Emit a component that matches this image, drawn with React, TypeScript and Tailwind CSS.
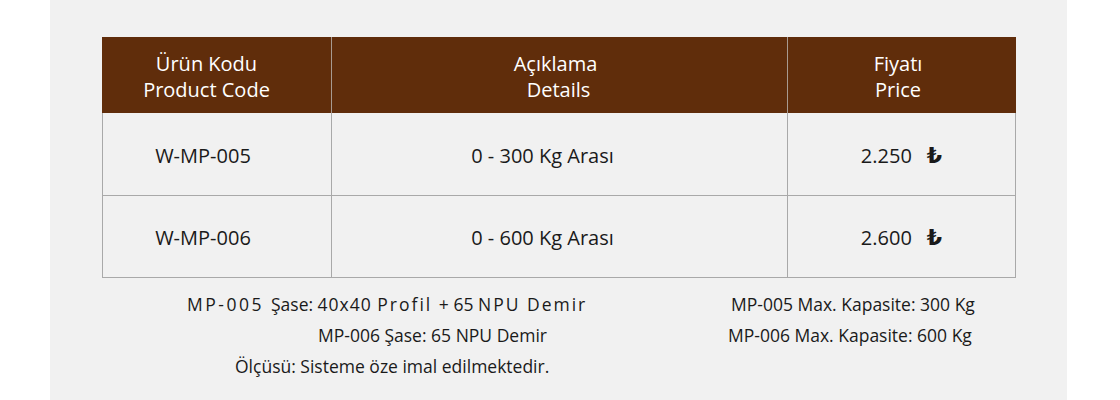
const rows = [
  { code: "W-MP-005", desc: "0 - 300 Kg Arası", price: "2.250" },
  { code: "W-MP-006", desc: "0 - 600 Kg Arası", price: "2.600" },
];

function Lira() {
  return (
    <span className="ml-[15px] font-['DejaVu_Sans','Noto_Sans',sans-serif] text-[22px] leading-none font-bold">
      ₺
    </span>
  );
}

export default function App() {
  return (
    <div className="h-[400px] w-[1120px] bg-white font-['Open_Sans',sans-serif]">
      <div className="ml-[50px] h-full w-[1017px] bg-[#f1f1f1] pt-[37px]">
        <div className="ml-[52px] w-[914px] border-x border-b border-[#a9a9a9]">
          <div className="-mx-px grid h-[76px] grid-cols-[230px_456px_228px] bg-[#602d0b] text-[20px] leading-[26px] text-white">
            <div className="flex flex-col items-center justify-center border-r border-[#a89a90] pt-[3px] pr-[20px]">
              <span>Ürün Kodu</span>
              <span>Product Code</span>
            </div>
            <div className="flex flex-col items-center justify-center border-r border-[#a89a90] pt-[3px] pr-[8px]">
              <span>Açıklama</span>
              <span className="pl-[6px]">Details</span>
            </div>
            <div className="flex flex-col items-center justify-center pt-[3px] pr-[8px]">
              <span>Fiyatı</span>
              <span>Price</span>
            </div>
          </div>
          {rows.map((r, i) => (
            <div
              key={r.code}
              className={`grid h-[82px] grid-cols-[229px_456px_227px] text-[20px] text-[#1a1a1a] ${
                i > 0 ? "border-t border-[#a9a9a9]" : ""
              }`}
            >
              <div className="flex items-center justify-center border-r border-[#a9a9a9] pt-[3px] pr-[28px]">
                {r.code}
              </div>
              <div className="flex items-center justify-center border-r border-[#a9a9a9] pt-[3px] pr-[34px]">
                {r.desc}
              </div>
              <div className="flex items-center justify-center pt-[3px]">
                {r.price}
                <Lira />
              </div>
            </div>
          ))}
        </div>

        <div className="mt-[11px] flex text-[17.5px] leading-[31px] text-[#1a1a1a]">
          <div className="w-[678px]">
            <div className="pl-[137px]">
              <span className="tracking-[2.5px]">MP-005 </span>
              <span>Şase: </span>
              <span className="tracking-[1px]">40x40 </span>
              <span className="tracking-[2px]">Profil </span>
              <span>+ 65 </span>
              <span className="tracking-[2px]">NPU Demir</span>
            </div>
            <div className="pl-[268px]">MP-006 Şase: 65 NPU Demir</div>
            <div className="pl-[185px]">Ölçüsü: Sisteme öze imal edilmektedir.</div>
          </div>
          <div>
            <div className="pl-[3px]">MP-005 Max. Kapasite: 300 Kg</div>
            <div>MP-006 Max. Kapasite: 600 Kg</div>
          </div>
        </div>
      </div>
    </div>
  );
}
